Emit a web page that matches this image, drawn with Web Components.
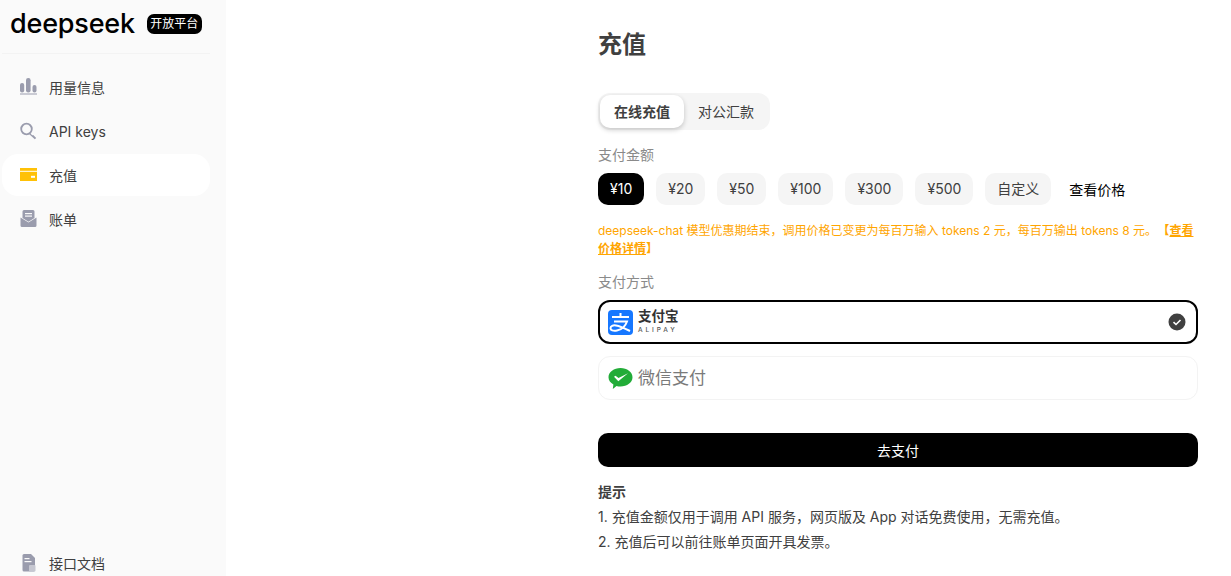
<!DOCTYPE html>
<html lang="zh"><head><meta charset="utf-8"><title>充值</title>
<style>
html,body{margin:0;padding:0;height:100%;overflow:hidden;background:#fff}
body{font-family:Inter,"Noto Sans CJK SC",sans-serif;color:#404040;font-size:14px}
app-shell{height:576px}
</style></head><body>
<app-shell>
  <side-bar slot="side">
    <nav-item icon="chart">用量信息</nav-item>
    <nav-item icon="key">API keys</nav-item>
    <nav-item icon="card" active>充值</nav-item>
    <nav-item icon="mail">账单</nav-item>
    <nav-item icon="doc" slot="bottom">接口文档</nav-item>
  </side-bar>
  <topup-page></topup-page>
</app-shell>
<script>
function def(name, html){
  customElements.define(name, class extends HTMLElement{
    constructor(){super();this.attachShadow({mode:'open'}).innerHTML=typeof html==='function'?html(this):html;}
  });
}
const G='#9a9cad';
const ICONS={
 chart:`<svg width="18" height="18" viewBox="0 0 18 18"><rect x="1" y="5" width="4.200" height="9.500" rx="2" fill="${G}"/><rect x="7" y="0" width="4.600" height="14.500" rx="2.200" fill="${G}"/><rect x="13.500" y="7" width="4" height="7.500" rx="2" fill="${G}"/><rect x="1" y="15.500" width="17" height="1" fill="${G}"/></svg>`,
 key:`<svg width="18" height="18" viewBox="0 0 18 18"><circle cx="7.500" cy="7" r="5.300" fill="none" stroke="${G}" stroke-width="1.800"/><path d="M11 11l2.200 2.200 1-.2 3 3-1.400 1.200L10 12z" fill="${G}"/></svg>`,
 card:`<svg width="18" height="18" viewBox="0 0 18 18"><path d="M1 2h17v2.800H1z" fill="#ffc107"/><path d="M1 5.800h17v9.200H1z" fill="#ffc107"/><rect x="12" y="9.800" width="4" height="2" fill="#fff"/></svg>`,
 mail:`<svg width="18" height="18" viewBox="0 0 18 18"><path d="M5 0h9a1.500 1.500 0 0 1 1.500 1.500V8l-6 3.800L3.500 8V1.500A1.500 1.500 0 0 1 5 0z" fill="${G}"/><rect x="6" y="3" width="7" height="1.200" fill="#fafafa"/><rect x="6" y="5.500" width="7" height="1.200" fill="#fafafa"/><path d="M1.500 7.500l8 5 8-5V15.500a1.500 1.500 0 0 1-1.500 1.500H3a1.500 1.500 0 0 1-1.500-1.500z" fill="${G}"/></svg>`,
 doc:`<svg width="18" height="18" viewBox="0 0 18 18"><path d="M5 0h7l4 4v12a1.500 1.500 0 0 1-1.500 1.500H5A1.500 1.500 0 0 1 3.500 16V1.500A1.500 1.500 0 0 1 5 0z" fill="${G}"/><rect x="5.500" y="4" width="5" height="1.200" fill="#fafafa"/><rect x="5.500" y="7" width="7" height="1.200" fill="#fafafa"/><rect x="10" y="11" width="6.500" height="6.500" rx="1" fill="#c6c7d1"/></svg>`
};
def('app-shell',`<style>:host{display:flex;width:1231px;height:576px;overflow:hidden}
main{flex:1;min-width:0}</style><slot name="side"></slot><main><slot></slot></main>`);
def('side-bar',`<style>
:host{display:flex;flex-direction:column;flex:none;width:226px;height:576px;background:#fafafa;box-sizing:border-box;padding:0 16px 0 2px;font-family:Inter,"Noto Sans CJK SC",sans-serif}
header{display:flex;align-items:center;height:53px;border-bottom:1px solid #f3f3f3;padding-left:8px;gap:12px}
.logo{font:500 27px/1 Inter,sans-serif;color:#000;letter-spacing:-.2px;position:relative;top:-3px}
.badge{background:#000;color:#fff;border-radius:7px;font-size:12px;line-height:20px;height:20px;width:55px;text-align:center;white-space:nowrap;position:relative;top:-2.500px}
.list{display:flex;flex-direction:column;gap:2px;padding-top:12px;flex:1}
.bottom{margin-bottom:-8px}
</style><header><span class="logo">deepseek</span><span class="badge">开放平台</span></header>
<div class="list"><slot></slot></div><div class="bottom"><slot name="bottom"></slot></div>`);
def('nav-item',t=>`<style>
:host{display:flex;align-items:center;height:42px;border-radius:16px;padding-left:17px;gap:12px;font-size:14px;color:#404040}
:host([active]){background:#fff}
svg{display:block;flex:none}
</style>${ICONS[t.getAttribute('icon')]}<span><slot></slot></span>`);
def('amount-chip',`<style>
:host{display:inline-flex;align-items:center;justify-content:center;height:32px;padding:0 12px;border-radius:10px;background:#f5f5f5;color:#404040;font-size:14px;line-height:32px;box-sizing:border-box}
:host([active]){background:#000;color:#fff}
</style><slot></slot>`);
def('pay-option',`<style>
:host{display:flex;align-items:center;height:44px;box-sizing:border-box;border:1px solid #f3f3f3;border-radius:12px;padding:0 9px;gap:5px}
:host([active]){border:2px solid #000;padding:0 10px 0 8px}
.end{margin-left:auto;display:flex}
</style><slot name="icon"></slot><slot></slot><span class="end"><slot name="end"></slot></span>`);
def('topup-page',`<style>
:host{display:block;box-sizing:border-box;width:600px;margin-left:372px;font-family:Inter,"Noto Sans CJK SC",sans-serif;color:#404040;font-size:14px}
h1{margin:0;font-size:24px;line-height:32px;font-weight:700;padding-top:29px;color:#404040}
.tabs{display:inline-flex;background:#f5f5f5;border-radius:12px;padding:2px;height:37px;box-sizing:border-box;align-items:stretch}
.tab{padding:0 14px;line-height:33px;border-radius:10px;display:block}
.tab.on{background:#fff;font-weight:600;box-shadow:0 2px 5px rgba(0,0,0,.2)}
.tabwrap{height:37px;margin-top:32px}
.label{color:#8a8a8a;line-height:20px;margin-top:15px}
.chips{display:flex;align-items:center;margin-top:8px;gap:12px}
.price{color:#000;margin-left:6px}
.warn{margin:17px 0 0;font-size:12px;line-height:18px;color:#ffa500}
.warn a{color:inherit;text-decoration:underline;font-weight:600}
.warn b{font-weight:600;margin-left:-3px}
.l2{margin-top:14px}
.opts{display:flex;flex-direction:column;gap:12px;margin-top:8px}
.al{display:flex;flex-direction:column;margin-top:-1px;gap:2px}
.al b{font-size:13.500px;line-height:15px;font-weight:700;color:#333;letter-spacing:0}
.al i{font:500 6.500px/8px Inter,sans-serif;letter-spacing:2.900px;color:#555}
.wx{font-size:17px;color:#7a7a7a;line-height:24px}
button{display:block;width:100%;height:34px;margin-top:33px;border:0;border-radius:10px;background:#000;color:#fff;font:400 14px/36px Inter,"Noto Sans CJK SC",sans-serif;padding:0}
.tips{margin-top:12px;line-height:25px}
.tips strong{font-weight:600;display:block}
</style>
<h1>充值</h1>
<div class="tabwrap"><div class="tabs"><span class="tab on">在线充值</span><span class="tab">对公汇款</span></div></div>
<div class="label">支付金额</div>
<div class="chips"><amount-chip active>¥10</amount-chip><amount-chip>¥20</amount-chip><amount-chip>¥50</amount-chip><amount-chip>¥100</amount-chip><amount-chip>¥300</amount-chip><amount-chip>¥500</amount-chip><amount-chip>自定义</amount-chip><span class="price">查看价格</span></div>
<p class="warn">deepseek-chat 模型优惠期结束，调用价格已变更为每百万输入 tokens 2 元，每百万输出 tokens 8 元。 <b>【<a>查看价格详情</a>】</b></p>
<div class="label l2">支付方式</div>
<div class="opts">
<pay-option active>
 <svg slot="icon" width="25" height="25" viewBox="0 0 25 25"><rect width="25" height="25" rx="4" fill="#1677ff"/><path d="M4 7h17M12.500 3v4M6 11.500h13c-1.500 4.500-5 8-10 9-4 .8-6.500-.3-6.500-2.300 0-2.200 2.500-3.200 5.500-2.700 4 .6 8 2.500 14 5.500" fill="none" stroke="#fff" stroke-width="2"/></svg>
 <span class="al"><b>支付宝</b><i>ALIPAY</i></span>
 <svg slot="end" width="18" height="18" viewBox="0 0 18 18"><circle cx="9" cy="9" r="8.500" fill="#404040"/><path d="M5.500 9.200l2.500 2.300 4.500-4.500" fill="none" stroke="#fff" stroke-width="1.600"/></svg>
</pay-option>
<pay-option>
 <svg slot="icon" width="25" height="23" viewBox="0 0 25 23"><path d="M12.500 1C19 1 24.500 5 24.500 10.200s-5.500 9.300-12 9.300c-1.500 0-2.800-.2-4-.6L4.800 22l.6-4.500C2.500 15.800.5 13.200.5 10.200.5 5 6 1 12.500 1z" fill="#22ac38"/><path d="M6 9.800l1.500-1 3 2.200 9.500-4.800-9.700 8z" fill="#fff"/></svg>
 <span class="wx">微信支付</span>
</pay-option>
</div>
<button>去支付</button>
<div class="tips"><strong>提示</strong><div>1. 充值金额仅用于调用 API 服务，网页版及 App 对话免费使用，无需充值。</div><div>2. 充值后可以前往账单页面开具发票。</div></div>
`);
</script>
</body></html>
